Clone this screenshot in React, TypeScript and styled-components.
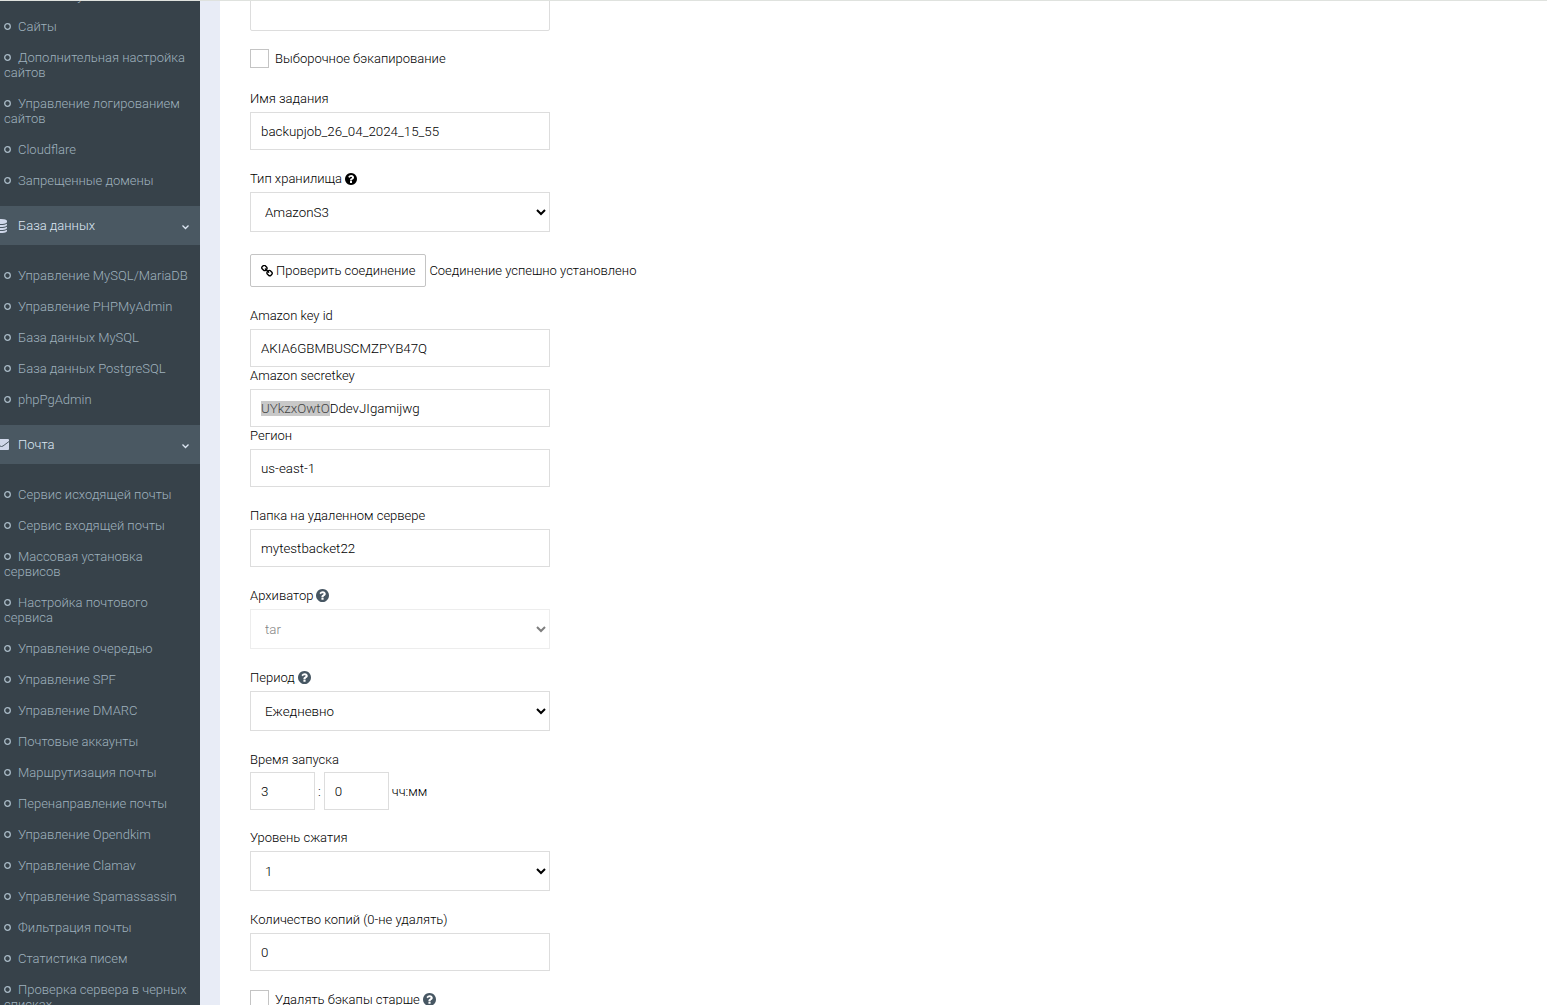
import React, { useEffect, useId, useRef } from "react";
import styled, { createGlobalStyle, css } from "styled-components";

const GlobalStyle = createGlobalStyle`
  *, *::before, *::after { box-sizing: border-box; }
  body { margin: 0; background: #fff; }
  body, input, select, textarea, button {
    font-family: Roboto, "Liberation Sans", sans-serif;
    font-weight: 300;
    color: #000;
  }
  body, button { font-size: 13px; }
`;

const Shell = styled.div`
  display: flex;
  height: 100vh;
  overflow: hidden;
  border-top: 1px solid #dfe2de;
`;

const Sidebar = styled.nav`
  flex: 0 0 200px;
  overflow: hidden;
  background: #37424a;
  line-height: 15px;
`;

const SectionButton = styled.button`
  display: flex;
  align-items: center;
  width: 100%;
  height: 39px;
  padding: 0 10px 0 0;
  border: 0;
  background: #4a5862;
  color: #dde7f3;
  text-align: left;
`;

const SectionIcon = styled.span`
  flex: none;
  width: 18px;
  height: 14px;
  color: #d0d8ea;
  svg { display: block; margin-left: -6px; }
`;

const SectionTitle = styled.span`
  flex: 1;
`;

const Menu = styled.ul<{ $scrolled?: boolean }>`
  list-style: none;
  margin: ${(p) => (p.$scrolled ? "-21px" : "0")} 0 0;
  padding: ${(p) => (p.$scrolled ? "0" : "15px")} 0 10px;
`;

const MenuLink = styled.a`
  display: block;
  padding: 8px 10px 8px 4px;
  color: #9fb1bd;
  text-decoration: none;
`;

const RingSvg = styled.svg`
  width: 7px;
  height: 7px;
  margin-right: 7px;
  vertical-align: 1px;
  fill: none;
  stroke: #a9bac6;
`;

const Ring = () => (
  <RingSvg viewBox="0 0 7 7" aria-hidden="true">
    <circle cx="3.5" cy="3.5" r="2.8" strokeWidth="1.3" />
  </RingSvg>
);

const Gutter = styled.div`
  flex: 0 0 20px;
  background: #e8ecf6;
`;

const Content = styled.main`
  flex: 1;
  min-width: 0;
  overflow: hidden;
  padding: 0 30px;
  background: #fff;
`;

const Form = styled.form`
  display: flex;
  flex-direction: column;
  gap: 20px;
  line-height: 17px;
`;

const Field = styled.div<{ $tight?: boolean }>`
  display: flex;
  flex-direction: column;
  gap: ${(p) => (p.$tight ? "4px" : "5px")};
  margin-bottom: ${(p) => (p.$tight ? "-1px" : "0")};
`;

const Stack = styled.div`
  display: flex;
  flex-direction: column;
`;

const LabelRow = styled.div`
  display: flex;
  align-items: center;
  gap: 3px;
  height: 17px;
`;

const control = css`
  width: 300px;
  max-width: 100%;
  border: 1px solid #ddd;
  border-radius: 0;
  background: #fff;
  outline: none;
`;

const TextInput = styled.input<{ $short?: boolean }>`
  ${control}
  width: ${(p) => (p.$short ? "65px" : "300px")};
  height: 38px;
  padding: 0 10px;
  &::selection { background: #c8c8c8; color: #444; }
`;

const Notes = styled.textarea`
  ${control}
  display: block;
  height: 60px;
  margin: -30px 0 -1px;
  border-radius: 2px;
  resize: none;
`;

const Picker = styled.select`
  ${control}
  height: 40px;
  padding: 0 1px 0 10px;
  &:disabled { opacity: 0.5; }
`;

const CheckRow = styled.div`
  display: flex;
  align-items: center;
  gap: 3px;
  height: 19px;
  margin: -1px 0 2px;
`;

const Tick = styled.input`
  appearance: none;
  width: 19px;
  height: 19px;
  margin: 0 3px 0 0;
  border: 1px solid #c4c4c4;
  background: #fff;
`;

const Inline = styled.div<{ $spaced?: boolean }>`
  display: flex;
  align-items: center;
  gap: 3px;
  margin-top: ${(p) => (p.$spaced ? "2px" : "0")};
`;

const TestButton = styled.button`
  display: flex;
  align-items: center;
  gap: 3px;
  height: 33px;
  padding: 0 10px;
  border: 1px solid #c4c4c4;
  border-radius: 2px;
  background: #fff;
`;

const HelpIcon = styled.svg<{ $dark?: boolean }>`
  flex: none;
  width: ${(p) => (p.$dark ? "12px" : "13px")};
  height: ${(p) => (p.$dark ? "12px" : "13px")};
  fill: ${(p) => (p.$dark ? "#000" : "#475763")};
`;

const Help = ({ dark }: { dark?: boolean }) => (
  <HelpIcon $dark={dark} viewBox="128 128 1536 1536" aria-hidden="true">
    <path d="M1024 1376v-192q0-14-9-23t-23-9h-192q-14 0-23 9t-9 23v192q0 14 9 23t23 9h192q14 0 23-9t9-23zm256-672q0-88-55.5-163t-138.5-116-170-41q-243 0-371 213-15 24 8 42l132 100q7 6 19 6 16 0 25-12 53-68 86-92 34-24 86-24 48 0 85.5 26t37.5 59q0 38-20 61t-68 45q-63 28-115.5 86.5t-52.5 125.5v36q0 14 9 23t23 9h192q14 0 23-9t9-23q0-19 21.5-49.5t54.5-49.5q32-18 49-28.5t46-35 44.5-48 28-60.5 12.5-81zm384 192q0 209-103 385.5t-279.5 279.5-385.5 103-385.5-103-279.5-279.5-103-385.5 103-385.5 279.5-279.5 385.5-103 385.5 103 279.5 279.5 103 385.5z" />
  </HelpIcon>
);

const ChainIcon = () => (
  <svg width="12" height="12" viewBox="80 80 1632 1632" aria-hidden="true">
    <path d="M1520 1216q0-40-28-68l-208-208q-28-28-68-28-42 0-72 32 3 3 19 18.5t21.5 21.5 15 19 13 25.5 3.5 27.5q0 40-28 68t-68 28q-15 0-27.5-3.5t-25.5-13-19-15-21.5-21.5-18.5-19q-33 31-33 73 0 40 28 68l206 207q27 27 68 27 40 0 68-26l147-146q28-28 28-67zm-703-705q0-40-28-68l-206-207q-28-28-68-28-39 0-68 27l-147 146q-28 28-28 67 0 40 28 68l208 208q27 27 68 27 42 0 72-31-3-3-19-18.5t-21.5-21.5-15-19-13-25.5-3.5-27.5q0-40 28-68t68-28q15 0 27.5 3.5t25.5 13 19 15 21.5 21.5 18.5 19q33-31 33-73zm895 705q0 120-85 203l-147 146q-83 83-203 83-121 0-204-85l-206-207q-83-83-83-203 0-123 88-209l-88-88q-86 88-208 88-120 0-204-84l-208-208q-84-84-84-204t85-203l147-146q83-83 203-83 121 0 204 85l206 207q83 83 83 203 0 123-88 209l88 88q86-88 208-88 120 0 204 84l208 208q84 84 84 204z" />
  </svg>
);

const DatabaseIcon = () => (
  <svg width="14" height="14" viewBox="0 0 1792 1792" fill="currentColor" aria-hidden="true">
    <path d="M896 768q237 0 443-43t325-127v170q0 69-103 128t-280 93.5-385 34.5-385-34.5-280-93.5-103-128v-170q119 84 325 127t443 43zm0 768q237 0 443-43t325-127v170q0 69-103 128t-280 93.5-385 34.5-385-34.5-280-93.5-103-128v-170q119 84 325 127t443 43zm0-384q237 0 443-43t325-127v170q0 69-103 128t-280 93.5-385 34.5-385-34.5-280-93.5-103-128v-170q119 84 325 127t443 43zm0-1152q208 0 385 34.5t280 93.5 103 128v128q0 69-103 128t-280 93.5-385 34.5-385-34.5-280-93.5-103-128v-128q0-69 103-128t280-93.5 385-34.5z" />
  </svg>
);

const MailIcon = () => (
  <svg width="15" height="14" viewBox="0 0 15 14" aria-hidden="true">
    <rect x="0" y="1" width="15" height="11" rx="1" fill="currentColor" />
    <path d="M0 3.5 6 8q1.500 1 3 0L15 3.500" fill="none" stroke="#4a5862" />
  </svg>
);

const ChevronIcon = () => (
  <svg width="9" height="8" viewBox="0 0 9 8" aria-hidden="true">
    <path d="M1.500 3.500 4.500 6.500 7.500 3.500" fill="none" stroke="currentColor" strokeWidth="1.300" />
  </svg>
);

const siteItems = [
  "Alias library",
  "Сайты",
  "Дополнительная настройка сайтов",
  "Управление логированием сайтов",
  "Cloudflare",
  "Запрещенные домены",
];

const databaseItems = [
  "Управление MySQL/MariaDB",
  "Управление PHPMyAdmin",
  "База данных MySQL",
  "База данных PostgreSQL",
  "phpPgAdmin",
];

const mailItems = [
  "Сервис исходящей почты",
  "Сервис входящей почты",
  "Массовая установка сервисов",
  "Настройка почтового сервиса",
  "Управление очередью",
  "Управление SPF",
  "Управление DMARC",
  "Почтовые аккаунты",
  "Маршрутизация почты",
  "Перенаправление почты",
  "Управление Opendkim",
  "Управление Clamav",
  "Управление Spamassassin",
  "Фильтрация почты",
  "Статистика писем",
  "Проверка сервера в черных списках",
];

const MenuList = ({ items, scrolled }: { items: string[]; scrolled?: boolean }) => (
  <Menu $scrolled={scrolled}>
    {items.map((item) => (
      <li key={item}>
        <MenuLink href="#">
          <Ring />
          {item}
        </MenuLink>
      </li>
    ))}
  </Menu>
);

const Section = ({ title, icon }: { title: string; icon: React.ReactNode }) => (
  <SectionButton type="button" aria-expanded="true">
    <SectionIcon>{icon}</SectionIcon>
    <SectionTitle>{title}</SectionTitle>
    <ChevronIcon />
  </SectionButton>
);

type FieldProps = { label: string; value: string };

const TextField = ({ label, value, selected }: FieldProps & { selected?: number }) => {
  const id = useId();
  const ref = useRef<HTMLInputElement>(null);
  useEffect(() => {
    if (selected && ref.current) {
      ref.current.focus({ preventScroll: true });
      ref.current.setSelectionRange(0, selected);
    }
  }, [selected]);
  return (
    <Field>
      <LabelRow>
        <label htmlFor={id}>{label}</label>
      </LabelRow>
      <TextInput id={id} ref={ref} type="text" defaultValue={value} spellCheck={false} />
    </Field>
  );
};

const SelectField = ({
  label,
  value,
  help,
  disabled,
}: FieldProps & { help?: "dark" | "muted"; disabled?: boolean }) => {
  const id = useId();
  return (
    <Field>
      <LabelRow>
        <label htmlFor={id}>{label}</label>
        {help && <Help dark={help === "dark"} />}
      </LabelRow>
      <Picker id={id} disabled={disabled}>
        <option>{value}</option>
      </Picker>
    </Field>
  );
};

const CheckField = ({ label, help }: { label: string; help?: boolean }) => {
  const id = useId();
  return (
    <CheckRow>
      <Tick id={id} type="checkbox" />
      <label htmlFor={id}>{label}</label>
      {help && <Help />}
    </CheckRow>
  );
};

export default function App() {
  return (
    <>
      <GlobalStyle />
      <Shell>
        <Sidebar>
          <MenuList items={siteItems} scrolled />
          <Section title="База данных" icon={<DatabaseIcon />} />
          <MenuList items={databaseItems} />
          <Section title="Почта" icon={<MailIcon />} />
          <MenuList items={mailItems} />
        </Sidebar>
        <Gutter />
        <Content>
          <Form onSubmit={(e) => e.preventDefault()}>
            <Notes aria-label="Список" />
            <CheckField label="Выборочное бэкапирование" />
            <TextField label="Имя задания" value="backupjob_26_04_2024_15_55" />
            <SelectField label="Тип хранилища" value="AmazonS3" help="dark" />
            <Inline $spaced>
              <TestButton type="button">
                <ChainIcon />
                Проверить соединение
              </TestButton>
              <span>Соединение успешно установлено</span>
            </Inline>
            <Stack>
              <TextField label="Amazon key id" value="AKIA6GBMBUSCMZPYB47Q" />
              <TextField label="Amazon secretkey" value="UYkzxOwtODdevJIgamijwg" selected={9} />
              <TextField label="Регион" value="us-east-1" />
            </Stack>
            <TextField label="Папка на удаленном сервере" value="mytestbacket22" />
            <SelectField label="Архиватор" value="tar" help="muted" disabled />
            <SelectField label="Период" value="Ежедневно" help="muted" />
            <Field $tight>
              <LabelRow>
                <label htmlFor="hours">Время запуска</label>
              </LabelRow>
              <Inline>
                <TextInput $short id="hours" type="text" defaultValue="3" />
                <span>:</span>
                <TextInput $short aria-label="Минуты" type="text" defaultValue="0" />
                <span>чч:мм</span>
              </Inline>
            </Field>
            <SelectField label="Уровень сжатия" value="1" />
            <TextField label="Количество копий (0-не удалять)" value="0" />
            <CheckField label="Удалять бэкапы старше" help />
          </Form>
        </Content>
      </Shell>
    </>
  );
}
